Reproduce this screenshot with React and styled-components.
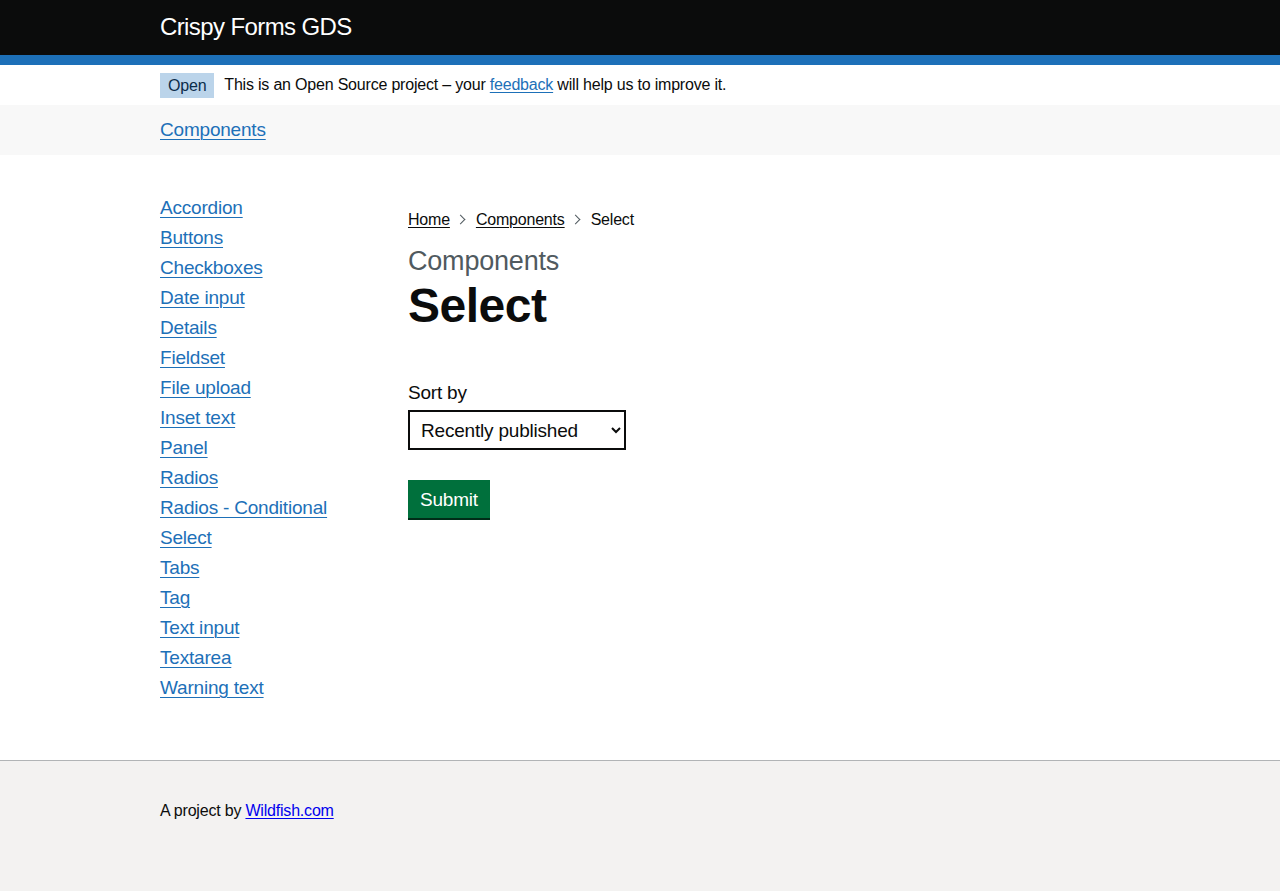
import React from "react";
import styled, { createGlobalStyle } from "styled-components";

const GlobalStyle = createGlobalStyle`
  html, body {
    margin: 0;
    padding: 0;
    background: #ffffff;
  }
  body {
    font-family: "Liberation Sans", Arial, sans-serif;
    color: #0b0c0c;
    letter-spacing: -0.2px;
    -webkit-font-smoothing: antialiased;
  }
  #root {
    min-height: 891px;
    display: flex;
    flex-direction: column;
  }
`;

const Container = styled.div`
  width: 960px;
  margin: 0 auto;
`;

const Header = styled.header`
  background: #0b0c0c;
  border-bottom: 10px solid #1d70b8;
`;

const HeaderInner = styled(Container)`
  height: 55px;
  display: flex;
  align-items: center;
`;

const ServiceName = styled.a`
  color: #ffffff;
  font-size: 24px;
  letter-spacing: -0.6px;
  text-decoration: none;
  line-height: 1;
  margin-top: -2px;
`;

const PhaseBanner = styled(Container)`
  height: 40px;
  display: flex;
  align-items: center;
  font-size: 16px;
`;

const Tag = styled.strong`
  font-weight: 400;
  background: #bbd4ea;
  color: #0c2d4a;
  padding: 0 8px;
  height: 25px;
  line-height: 25px;
  margin-right: 10px;
`;

const Link = styled.a`
  color: ${(p) => p.$color || "#1d70b8"};
  text-decoration: underline;
  text-underline-offset: 0.15em;
  text-decoration-thickness: 1px;
`;

const ServiceNav = styled.nav`
  background: #f8f8f8;
  height: 50px;
`;

const ServiceNavInner = styled(Container)`
  height: 50px;
  display: flex;
  align-items: center;
  font-size: 19px;
`;

const Main = styled(Container)`
  flex: 1;
  display: flex;
  padding: 38px 0 37px;
  box-sizing: border-box;
`;

const Sidebar = styled.ul`
  list-style: none;
  margin: 0 0 20px;
  padding: 0;
  width: 248px;
  flex-shrink: 0;
`;

const SideItem = styled.li`
  font-size: 19px;
  line-height: 30px;
  height: 30px;
`;

const Content = styled.div`
  flex: 1;
`;

const Breadcrumbs = styled.ol`
  list-style: none;
  margin: 14px 0 10px;
  padding: 0;
  display: flex;
  align-items: center;
  font-size: 16px;
  line-height: 25px;
`;

const Crumb = styled.li`
  display: flex;
  align-items: center;
`;

const Chevron = styled.span`
  display: inline-block;
  width: 6px;
  height: 6px;
  border-top: 1px solid #505a5f;
  border-right: 1px solid #505a5f;
  transform: rotate(45deg);
  margin: 0 12px 0 7px;
`;

const Caption = styled.span`
  display: block;
  color: #505a5f;
  font-size: 27px;
  line-height: 30px;
  margin-top: 14px;
`;

const Heading = styled.h1`
  margin: 5px 0 49px;
  font-size: 48px;
  font-weight: 700;
  line-height: 50px;
  letter-spacing: -0.5px;
`;

const Label = styled.label`
  display: block;
  font-size: 19px;
  line-height: 25px;
  margin-bottom: 5px;
`;

const Select = styled.select`
  display: block;
  width: 218px;
  height: 40px;
  border: 2px solid #0b0c0c;
  border-radius: 0;
  background: #ffffff;
  color: #0b0c0c;
  font-family: "Liberation Sans", Arial, sans-serif;
  font-size: 19px;
  letter-spacing: -0.2px;
  padding: 5px 4px 5px 7px;
  margin-bottom: 30px;
`;

const Button = styled.button`
  background: #00703c;
  color: #ffffff;
  border: 0;
  border-radius: 0;
  box-shadow: 0 2px 0 #002d18;
  font-family: "Liberation Sans", Arial, sans-serif;
  font-size: 19px;
  letter-spacing: -0.2px;
  line-height: 1;
  padding: 10px 12px 9px;
  height: 38px;
`;

const Footer = styled.footer`
  background: #f3f2f1;
  border-top: 1px solid #b1b4b6;
  height: 131px;
  box-sizing: border-box;
`;

const FooterInner = styled(Container)`
  padding-top: 39px;
  font-size: 16px;
  line-height: 22px;
`;

const components = [
  "Accordion",
  "Buttons",
  "Checkboxes",
  "Date input",
  "Details",
  "Fieldset",
  "File upload",
  "Inset text",
  "Panel",
  "Radios",
  "Radios - Conditional",
  "Select",
  "Tabs",
  "Tag",
  "Text input",
  "Textarea",
  "Warning text",
];

export default function App() {
  return (
    <>
      <GlobalStyle />
      <Header>
        <HeaderInner>
          <ServiceName href="#">Crispy Forms GDS</ServiceName>
        </HeaderInner>
      </Header>
      <PhaseBanner>
        <Tag>Open</Tag>
        <span>
          This is an Open Source project – your <Link href="#">feedback</Link> will help us to improve it.
        </span>
      </PhaseBanner>
      <ServiceNav>
        <ServiceNavInner>
          <Link href="#">Components</Link>
        </ServiceNavInner>
      </ServiceNav>
      <Main>
        <Sidebar>
          {components.map((c) => (
            <SideItem key={c}>
              <Link href="#">{c}</Link>
            </SideItem>
          ))}
        </Sidebar>
        <Content>
          <Breadcrumbs>
            <Crumb>
              <Link href="#" $color="#0b0c0c">Home</Link>
              <Chevron />
            </Crumb>
            <Crumb>
              <Link href="#" $color="#0b0c0c">Components</Link>
              <Chevron />
            </Crumb>
            <Crumb>Select</Crumb>
          </Breadcrumbs>
          <Caption>Components</Caption>
          <Heading>Select</Heading>
          <form onSubmit={(e) => e.preventDefault()}>
            <Label htmlFor="sort">Sort by</Label>
            <Select id="sort" defaultValue="published">
              <option value="published">Recently published</option>
              <option value="updated">Recently updated</option>
              <option value="views">Most views</option>
              <option value="comments">Most comments</option>
            </Select>
            <Button type="submit">Submit</Button>
          </form>
        </Content>
      </Main>
      <Footer>
        <FooterInner>
          A project by <Link href="#" $color="#0000ee">Wildfish.com</Link>
        </FooterInner>
      </Footer>
    </>
  );
}
